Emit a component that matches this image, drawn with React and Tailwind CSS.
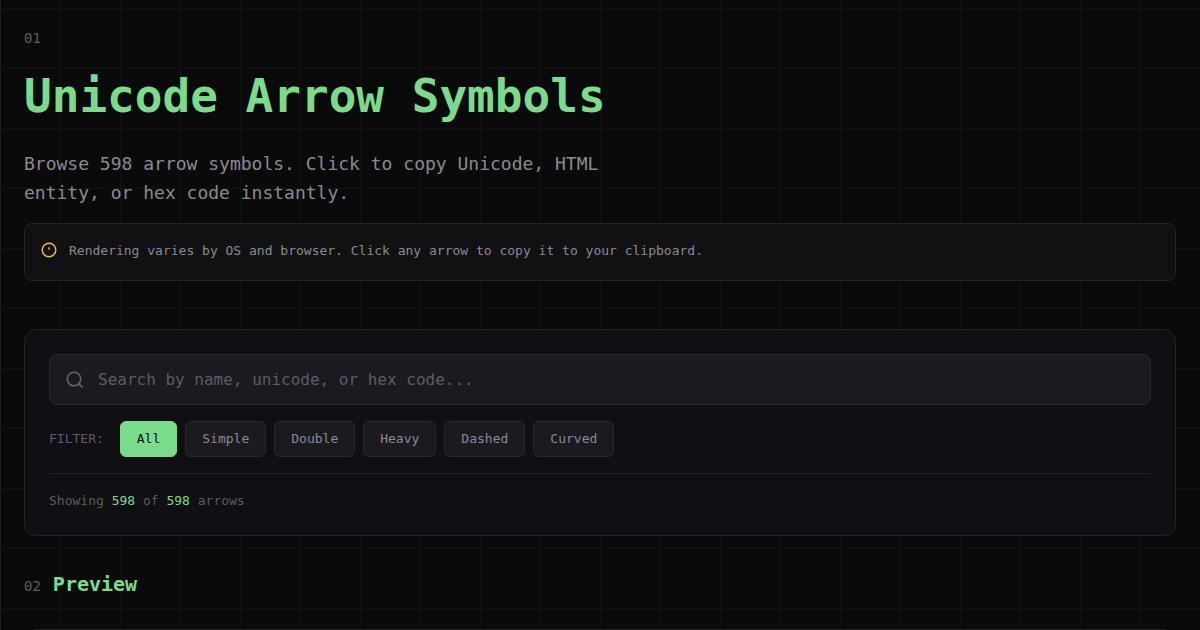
import { useState } from "react";

const FILTERS = ["All", "Simple", "Double", "Heavy", "Dashed", "Curved"];
const TOTAL = 598;

function SearchIcon() {
  return (
    <svg
      className="size-[18px] shrink-0 text-[#64636a]"
      viewBox="0 0 24 24"
      fill="none"
      stroke="currentColor"
      strokeWidth="2.2"
      aria-hidden="true"
    >
      <circle cx="10.7" cy="10.7" r="9" />
      <path d="m17.2 17.2 5 5" />
    </svg>
  );
}

function NoticeIcon() {
  return (
    <svg
      className="mt-[2px] size-4 shrink-0 text-[#f0bc3c]"
      viewBox="0 0 16 16"
      fill="none"
      stroke="currentColor"
      strokeWidth="1.4"
      aria-hidden="true"
    >
      <circle cx="8" cy="8" r="6.8" />
      <path d="M8 5.2v2.6" />
    </svg>
  );
}

function FilterButton({ label, active, onClick }) {
  return (
    <button
      type="button"
      aria-pressed={active}
      onClick={onClick}
      className={
        active
          ? "h-9 rounded-md border border-[#7adc8a] bg-[#7adc8a] px-4 text-[13px] text-[#0a0a0b]"
          : "h-9 rounded-md border border-[#29292d] bg-[#1b1a1f] px-4 text-[13px] text-[#8b8a91]"
      }
    >
      {label}
    </button>
  );
}

export default function App() {
  const [filter, setFilter] = useState("All");
  const [query, setQuery] = useState("");

  return (
    <div className="h-screen overflow-y-auto [scrollbar-width:none] bg-[#0a0a0b] bg-[linear-gradient(to_right,rgba(255,255,255,0.03)_1px,transparent_1px),linear-gradient(to_bottom,rgba(255,255,255,0.03)_1px,transparent_1px)] bg-[length:60px_60px] bg-[position:0_8px] font-['DejaVu_Sans_Mono',monospace] text-[#8b8a91]">
      <main className="border-l border-[#1d1d1f] pr-6 pl-[23px] pt-7 pb-12">
        <header>
          <p className="text-sm leading-5 text-[#5d5c63]">01</p>
          <h1 className="mt-5 text-[46px] leading-[56px] font-bold text-[#7adc8a]">
            Unicode Arrow Symbols
          </h1>
          <p className="mt-[25px] max-w-[600px] text-lg leading-[29px]">
            Browse 598 arrow symbols. Click to copy Unicode, HTML entity, or hex
            code instantly.
          </p>
        </header>

        <aside className="mt-4 flex gap-3 rounded-lg border border-[#252527] bg-[#111114] px-4 pt-4 pb-[18px]">
          <NoticeIcon />
          <p className="text-[13px] leading-[22px]">
            Rendering varies by OS and browser. Click any arrow to copy it to
            your clipboard.
          </p>
        </aside>

        <section className="mt-12 rounded-xl border border-[#232325] bg-[#100f13] p-6">
          <label className="flex h-[51px] items-center gap-[14px] rounded-lg border border-[#29292d] bg-[#1b1a1f] px-4">
            <SearchIcon />
            <input
              type="text"
              aria-label="Search arrows"
              value={query}
              onChange={(e) => setQuery(e.target.value)}
              placeholder="Search by name, unicode, or hex code..."
              className="min-w-0 flex-1 bg-transparent text-base text-[#e5e5e7] outline-none placeholder:text-[#5d5c63]"
            />
          </label>

          <div className="mt-4 flex flex-wrap items-center gap-2">
            <span className="mr-2 text-[13px] text-[#5d5c63]">FILTER:</span>
            {FILTERS.map((f) => (
              <FilterButton
                key={f}
                label={f}
                active={f === filter}
                onClick={() => setFilter(f)}
              />
            ))}
          </div>

          <p className="mt-4 border-t border-[#232325] pt-[17px] text-[13px] leading-5 text-[#5d5c63]">
            Showing <span className="text-[#7adc8a]">{TOTAL}</span> of{" "}
            <span className="text-[#7adc8a]">{TOTAL}</span> arrows
          </p>
        </section>

        <section className="mt-8">
          <div className="flex items-baseline gap-3">
            <span className="text-sm text-[#5d5c63]">02</span>
            <h2 className="text-xl leading-8 font-bold text-[#7adc8a]">
              Preview
            </h2>
          </div>
          <div className="mt-[29px] min-h-24 rounded-xl border border-[#232325] bg-[#100f13]" />
        </section>
      </main>
    </div>
  );
}
